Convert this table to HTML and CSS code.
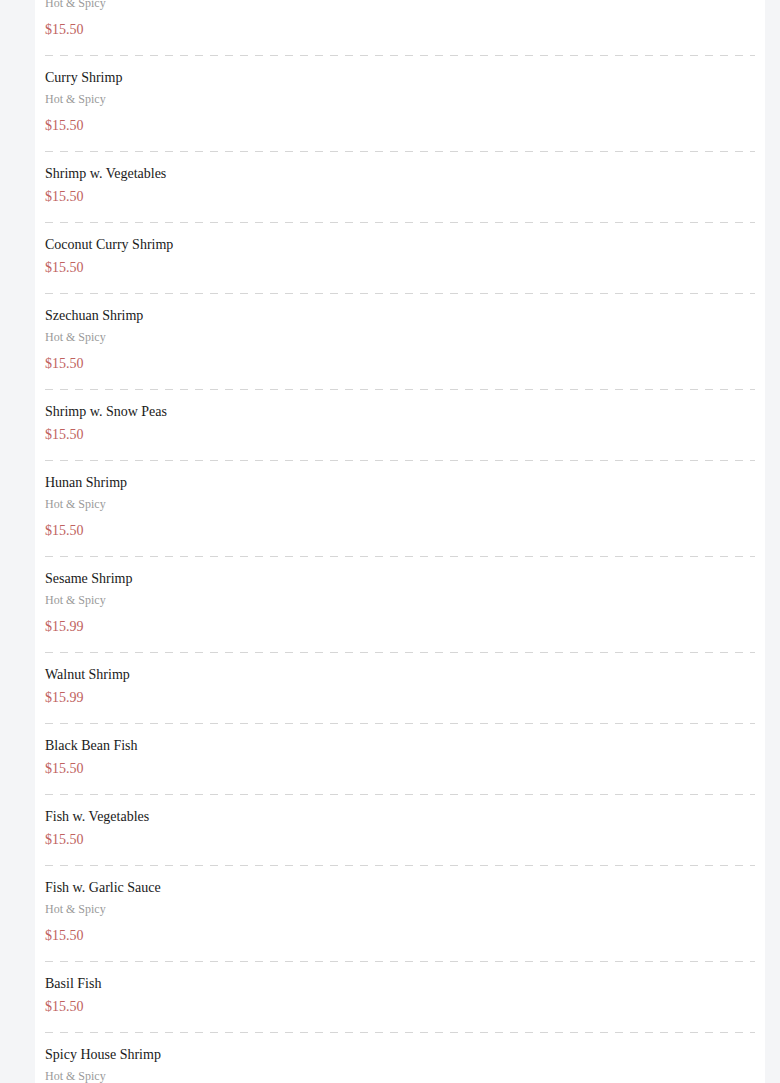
FILE: index.html
```html
<!DOCTYPE html>
<html>
<head>
<meta charset="utf-8">
<link rel="stylesheet" href="styles.css">
</head>
<body>
<div class="panel">
  <ul class="menu">
    <li class="item"><div class="name">Kung Pao Shrimp</div><div class="note">Hot &amp; Spicy</div><div class="price">$15.50</div></li>
    <li class="item"><div class="name">Curry Shrimp</div><div class="note">Hot &amp; Spicy</div><div class="price">$15.50</div></li>
    <li class="item"><div class="name">Shrimp w. Vegetables</div><div class="price">$15.50</div></li>
    <li class="item"><div class="name">Coconut Curry Shrimp</div><div class="price">$15.50</div></li>
    <li class="item"><div class="name">Szechuan Shrimp</div><div class="note">Hot &amp; Spicy</div><div class="price">$15.50</div></li>
    <li class="item"><div class="name">Shrimp w. Snow Peas</div><div class="price">$15.50</div></li>
    <li class="item"><div class="name">Hunan Shrimp</div><div class="note">Hot &amp; Spicy</div><div class="price">$15.50</div></li>
    <li class="item"><div class="name">Sesame Shrimp</div><div class="note">Hot &amp; Spicy</div><div class="price">$15.99</div></li>
    <li class="item"><div class="name">Walnut Shrimp</div><div class="price">$15.99</div></li>
    <li class="item"><div class="name">Black Bean Fish</div><div class="price">$15.50</div></li>
    <li class="item"><div class="name">Fish w. Vegetables</div><div class="price">$15.50</div></li>
    <li class="item"><div class="name">Fish w. Garlic Sauce</div><div class="note">Hot &amp; Spicy</div><div class="price">$15.50</div></li>
    <li class="item"><div class="name">Basil Fish</div><div class="price">$15.50</div></li>
    <li class="item"><div class="name">Spicy House Shrimp</div><div class="note">Hot &amp; Spicy</div><div class="price">$15.50</div></li>
  </ul>
</div>
</body>
</html>
```
FILE: styles.css
```css
html, body {
  margin: 0;
  padding: 0;
  background: #f4f5f7;
  font-family: "Liberation Serif", "Times New Roman", serif;
}
body {
  height: 1083px;
  overflow: hidden;
}
.panel {
  margin: -40px 15px 0 35px;
  background: #fff;
  padding: 0 10px;
}
.menu {
  list-style: none;
  margin: 0;
  padding: 0;
}
.item {
  padding: 12px 0 16px;
  background-image: repeating-linear-gradient(to right, #d6d6d6 0 8px, transparent 8px 15px);
  background-size: 100% 1px;
  background-repeat: no-repeat;
  background-position: left bottom;
}
.name {
  font-size: 14px;
  line-height: 20px;
  color: #1a1a1a;
}
.note {
  font-size: 12px;
  line-height: 18px;
  color: #9a9a9a;
  margin-top: 2px;
  margin-bottom: 8px;
}
.price {
  font-size: 14px;
  line-height: 20px;
  color: #c0625e;
  margin-top: 3px;
}
```
